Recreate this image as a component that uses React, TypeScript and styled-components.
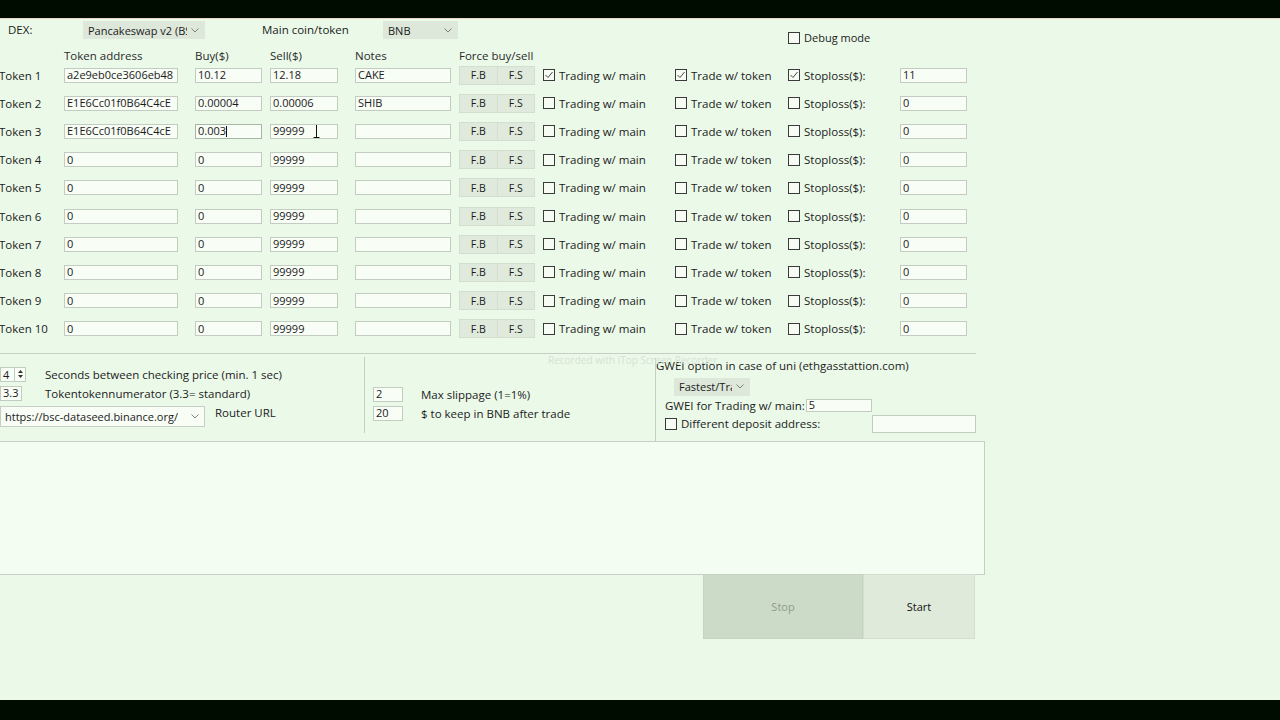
import styled, { createGlobalStyle } from 'styled-components';

const GlobalStyle = createGlobalStyle`
    html, body {
        margin: 0;
        padding: 0;
        background: #000c00;
    }
    body {
        font-family: "Open Sans", "Noto Sans", sans-serif;
        font-size: 11px;
        color: #1b1b1b;
    }
`;

type TokenRow = {
    address: string;
    buy: string;
    sell: string;
    notes: string;
    checked: boolean;
    stop: string;
};

const rows: TokenRow[] = [
    { address: 'a2e9eb0ce3606eb48', buy: '10.12', sell: '12.18', notes: 'CAKE', checked: true, stop: '11' },
    { address: 'E1E6Cc01f0B64C4cE', buy: '0.00004', sell: '0.00006', notes: 'SHIB', checked: false, stop: '0' },
    { address: 'E1E6Cc01f0B64C4cE', buy: '0.003', sell: '99999', notes: '', checked: false, stop: '0' },
    ...Array.from({ length: 7 }, () => ({ address: '0', buy: '0', sell: '99999', notes: '', checked: false, stop: '0' })),
];

const Chevron: React.FC = () => (
    <svg width="8" height="5" viewBox="0 0 8 5">
        <path d="M0.5 0.5 L4 4 L7.5 0.5" fill="none" stroke="#6d776b" strokeWidth="0.9" />
    </svg>
);

const CheckBox: React.FC<{ checked?: boolean }> = ({ checked }) => (
    <StyledCheck>
        {checked && (
            <svg width="10" height="10" viewBox="0 0 10 10">
                <path d="M1.5 5 L4 7.5 L8.5 2" fill="none" stroke="#333" strokeWidth="0.9" />
            </svg>
        )}
    </StyledCheck>
);

const App: React.FC = () => {
    return (
        <>
            <GlobalStyle />
            <StyledWindow>
                <StyledBlackBar $h={18} />
                <StyledMain>
                    <StyledTopRow>
                        <StyledDexLabel>DEX:</StyledDexLabel>
                        <StyledSelect $w={122}>
                            <span>Pancakeswap v2 (BS</span>
                            <Chevron />
                        </StyledSelect>
                        <StyledCoinLabel>Main coin/token</StyledCoinLabel>
                        <StyledSelect $w={75}>
                            <span>BNB</span>
                            <Chevron />
                        </StyledSelect>
                        <StyledDebug>
                            <CheckBox />
                            <span>Debug mode</span>
                        </StyledDebug>
                    </StyledTopRow>

                    <StyledGrid>
                        <span />
                        <StyledHead>Token address</StyledHead>
                        <StyledHead>Buy($)</StyledHead>
                        <StyledHead>Sell($)</StyledHead>
                        <StyledHead>Notes</StyledHead>
                        <StyledHead>Force buy/sell</StyledHead>
                        <span />
                        <span />
                        <span />
                        <span />
                        {rows.map((row, i) => (
                            <StyledRow key={i}>
                                <StyledTokenLabel>Token {i + 1}</StyledTokenLabel>
                                <StyledInput $w={114}>{row.address}</StyledInput>
                                <StyledInput $w={67} $focus={i === 2}>
                                    {row.buy}
                                    {i === 2 && <StyledCaret />}
                                </StyledInput>
                                <StyledInput $w={68}>
                                    {row.sell}
                                    {i === 2 && (
                                        <StyledIBeam width="7" height="14" viewBox="0 0 7 14">
                                            <path d="M0.5 0.5 H6.5 M3.5 0.5 V13.5 M0.5 13.5 H6.5" stroke="#111" strokeWidth="1" fill="none" />
                                        </StyledIBeam>
                                    )}
                                </StyledInput>
                                <StyledInput $w={96}>{row.notes}</StyledInput>
                                <StyledForce>
                                    <StyledSmallButton>F.B</StyledSmallButton>
                                    <StyledSmallButton>F.S</StyledSmallButton>
                                </StyledForce>
                                <StyledCheckLabel>
                                    <CheckBox checked={row.checked} />
                                    <span>Trading w/ main</span>
                                </StyledCheckLabel>
                                <StyledCheckLabel>
                                    <CheckBox checked={row.checked} />
                                    <span>Trade w/ token</span>
                                </StyledCheckLabel>
                                <StyledCheckLabel>
                                    <CheckBox checked={row.checked} />
                                    <span>Stoploss($):</span>
                                </StyledCheckLabel>
                                <StyledInput $w={67}>{row.stop}</StyledInput>
                            </StyledRow>
                        ))}
                    </StyledGrid>

                    <StyledSettings>
                        <StyledWatermark>Recorded with iTop Screen Recorder</StyledWatermark>
                        <StyledLeftPanel>
                            <StyledSettingRow $top={10}>
                                <StyledSpinner>
                                    <span>4</span>
                                    <StyledSpinArrows>
                                        <svg width="5" height="10" viewBox="0 0 5 10">
                                            <path d="M0 4 L2.5 1 L5 4 Z M0 6 L2.5 9 L5 6 Z" fill="#333" />
                                        </svg>
                                    </StyledSpinArrows>
                                </StyledSpinner>
                                <StyledSettingText>Seconds between checking price (min. 1 sec)</StyledSettingText>
                            </StyledSettingRow>
                            <StyledSettingRow $top={4}>
                                <StyledInput $w={22}>3.3</StyledInput>
                                <StyledSettingText $gap={23}>Tokentokennumerator (3.3= standard)</StyledSettingText>
                            </StyledSettingRow>
                            <StyledSettingRow $top={5}>
                                <StyledSelect $w={205} $h={21} $plain>
                                    <span>https://bsc-dataseed.binance.org/</span>
                                    <Chevron />
                                </StyledSelect>
                                <StyledRouterLabel>Router URL</StyledRouterLabel>
                            </StyledSettingRow>
                        </StyledLeftPanel>
                        <StyledMidPanel>
                            <StyledSettingRow $top={33}>
                                <StyledInput $w={30}>2</StyledInput>
                                <StyledSettingText $gap={18}>Max slippage (1=1%)</StyledSettingText>
                            </StyledSettingRow>
                            <StyledSettingRow $top={4}>
                                <StyledInput $w={30}>20</StyledInput>
                                <StyledSettingText $gap={18}>$ to keep in BNB after trade</StyledSettingText>
                            </StyledSettingRow>
                        </StyledMidPanel>
                        <StyledRightPanel>
                            <StyledGroupTitle>GWEI option in case of uni (ethgasstattion.com)</StyledGroupTitle>
                            <StyledGweiSelect>
                                <StyledSelect $w={76} $h={18}>
                                    <span>Fastest/Tra</span>
                                    <Chevron />
                                </StyledSelect>
                            </StyledGweiSelect>
                            <StyledGweiRow>
                                <span>GWEI for Trading w/ main:</span>
                                <StyledInput $w={66} $h={13}>5</StyledInput>
                            </StyledGweiRow>
                            <StyledDepositRow>
                                <StyledCheckLabel>
                                    <CheckBox />
                                    <span>Different deposit address:</span>
                                </StyledCheckLabel>
                                <StyledInput $w={104} $h={18} />
                            </StyledDepositRow>
                        </StyledRightPanel>
                    </StyledSettings>

                    <StyledLog />

                    <StyledButtons>
                        <StyledBigButton $disabled>Stop</StyledBigButton>
                        <StyledBigButton $w={112}>Start</StyledBigButton>
                    </StyledButtons>
                </StyledMain>
                <StyledBlackBar $h={20} />
            </StyledWindow>
        </>
    );
};

const StyledWindow = styled.div`
    width: 1280px;
    height: 720px;
    display: flex;
    flex-direction: column;
    overflow: hidden;
`;

const StyledBlackBar = styled.div<{ $h: number }>`
    height: ${(p) => p.$h}px;
    flex-shrink: 0;
    background: #000c00;
`;

const StyledMain = styled.div`
    flex: 1;
    background: #ebf9e9;
    border-top: 1px solid #e9d6c8;
    display: flex;
    flex-direction: column;
    position: relative;
`;

const StyledTopRow = styled.div`
    height: 27px;
    display: flex;
    align-items: flex-start;
    padding: 2px 0 0 8px;
    box-sizing: border-box;
`;

const StyledDexLabel = styled.div`
    width: 75px;
    line-height: 18px;
    font-size: 11.5px;
`;

const StyledCoinLabel = styled.div`
    width: 121px;
    margin-left: 57px;
    line-height: 18px;
    font-size: 11.5px;
`;

const StyledSelect = styled.div<{ $w: number; $h?: number; $plain?: boolean }>`
    width: ${(p) => p.$w}px;
    height: ${(p) => p.$h ?? 18}px;
    box-sizing: border-box;
    display: flex;
    align-items: center;
    justify-content: space-between;
    padding: 0 5px 0 4px;
    background: ${(p) => (p.$plain ? '#f8fdf6' : '#dde8da')};
    border: 1px solid ${(p) => (p.$plain ? '#c5cfc3' : '#dde8da')};
    font-size: 11px;
    white-space: nowrap;
    overflow: hidden;
    span {
        overflow: hidden;
    }
    svg {
        flex-shrink: 0;
        margin-left: 4px;
    }
`;

const StyledDebug = styled.div`
    margin-left: 330px;
    align-self: flex-end;
    margin-bottom: 1px;
    display: flex;
    align-items: center;
    gap: 4px;
`;

const StyledGrid = styled.div`
    display: grid;
    grid-template-columns: 64px 131px 75px 85px 104px 84px 132px 113px 112px 67px;
    grid-template-rows: 19px;
    grid-auto-rows: 28.2px;
    width: 967px;
`;

const StyledRow = styled.div`
    display: contents;
    & > * {
        align-self: center;
        margin-bottom: 8px;
    }
`;

const StyledHead = styled.div`
    align-self: center;
    color: #2a2a2a;
    font-size: 11.5px;
`;

const StyledTokenLabel = styled.div`
    font-size: 11.5px;
    margin-left: -1px;
    white-space: nowrap;
`;

const StyledInput = styled.div<{ $w: number; $h?: number; $focus?: boolean }>`
    position: relative;
    width: ${(p) => p.$w}px;
    height: ${(p) => p.$h ?? 15}px;
    box-sizing: border-box;
    flex-shrink: 0;
    border: 1px solid ${(p) => (p.$focus ? '#a9b6a6' : '#c2ccc0')};
    background: #f8fdf6;
    padding-left: 2px;
    font-size: 11px;
    line-height: 12px;
    white-space: nowrap;
    overflow: hidden;
    display: flex;
    align-items: center;
`;

const StyledCaret = styled.span`
    display: inline-block;
    width: 1px;
    height: 11px;
    background: #111;
`;

const StyledIBeam = styled.svg`
    position: absolute;
    left: 42px;
    top: -1px;
`;

const StyledForce = styled.div`
    display: flex;
    width: 76px;
    height: 19px;
`;

const StyledSmallButton = styled.div`
    flex: 1;
    display: flex;
    align-items: center;
    justify-content: center;
    background: #dfe9dc;
    border: 1px solid #d3ddd0;
    font-size: 10.5px;
    & + & {
        border-left: none;
    }
`;

const StyledCheckLabel = styled.div`
    display: flex;
    align-items: center;
    gap: 4px;
    white-space: nowrap;
    font-size: 11.5px;
`;

const StyledCheck = styled.div`
    width: 12px;
    height: 12px;
    box-sizing: border-box;
    border: 1px solid #3a3a3a;
    background: #f6fcf4;
    display: flex;
    align-items: center;
    justify-content: center;
    flex-shrink: 0;
`;

const StyledSettings = styled.div`
    position: relative;
    margin-top: 6px;
    width: 976px;
    height: 87px;
    border-top: 1px solid #c5cfc3;
    display: flex;
`;

const StyledWatermark = styled.div`
    position: absolute;
    left: 548px;
    top: -1px;
    font-size: 10px;
    color: #d5e2d2;
    white-space: nowrap;
`;

const StyledLeftPanel = styled.div`
    width: 364px;
    display: flex;
    flex-direction: column;
    border-right: 1px solid #c5cfc3;
    margin: 3px 0 8px 0;
`;

const StyledMidPanel = styled.div`
    width: 290px;
    box-sizing: border-box;
    display: flex;
    flex-direction: column;
    padding-left: 8px;
`;

const StyledRightPanel = styled.div`
    flex: 1;
    border-left: 1px solid #c5cfc3;
    margin-top: 4px;
    display: flex;
    flex-direction: column;
`;

const StyledSettingRow = styled.div<{ $top: number }>`
    display: flex;
    align-items: center;
    margin-top: ${(p) => p.$top}px;
`;

const StyledSettingText = styled.span<{ $gap?: number }>`
    margin-left: ${(p) => p.$gap ?? 19}px;
    font-size: 11.5px;
    white-space: nowrap;
`;

const StyledSpinner = styled.div`
    width: 26px;
    height: 15px;
    box-sizing: border-box;
    border: 1px solid #c2ccc0;
    background: #f8fdf6;
    display: flex;
    align-items: center;
    justify-content: space-between;
    padding-left: 2px;
    font-size: 11px;
`;

const StyledSpinArrows = styled.div`
    width: 10px;
    height: 13px;
    border-left: 1px solid #c2ccc0;
    display: flex;
    align-items: center;
    justify-content: center;
`;

const StyledRouterLabel = styled.span`
    margin: -1px 0 0 10px;
    align-self: flex-start;
    font-size: 11.5px;
`;

const StyledGroupTitle = styled.div`
    font-size: 11.5px;
    white-space: nowrap;
`;

const StyledGweiSelect = styled.div`
    margin: 5px 0 0 18px;
`;

const StyledGweiRow = styled.div`
    display: flex;
    align-items: center;
    margin: 2px 0 0 9px;
    font-size: 11.5px;
    white-space: nowrap;
    gap: 1px;
`;

const StyledDepositRow = styled.div`
    display: flex;
    align-items: center;
    justify-content: space-between;
    margin: 2px 0 0 9px;
`;

const StyledLog = styled.div`
    width: 985px;
    height: 134px;
    box-sizing: border-box;
    background: #f4fdf2;
    border: 1px solid #c5cfc3;
    border-left: none;
`;

const StyledButtons = styled.div`
    display: flex;
    margin: -1px 0 0 703px;
    height: 65px;
`;

const StyledBigButton = styled.div<{ $w?: number; $disabled?: boolean }>`
    width: ${(p) => p.$w ?? 160}px;
    display: flex;
    align-items: center;
    justify-content: center;
    font-size: 11px;
    background: ${(p) => (p.$disabled ? '#ccdac8' : '#dfeadb')};
    color: ${(p) => (p.$disabled ? '#8f9c8c' : '#111')};
    border: 1px solid ${(p) => (p.$disabled ? '#c6d3c2' : '#d3ddd0')};
    box-sizing: border-box;
`;

export default App;
